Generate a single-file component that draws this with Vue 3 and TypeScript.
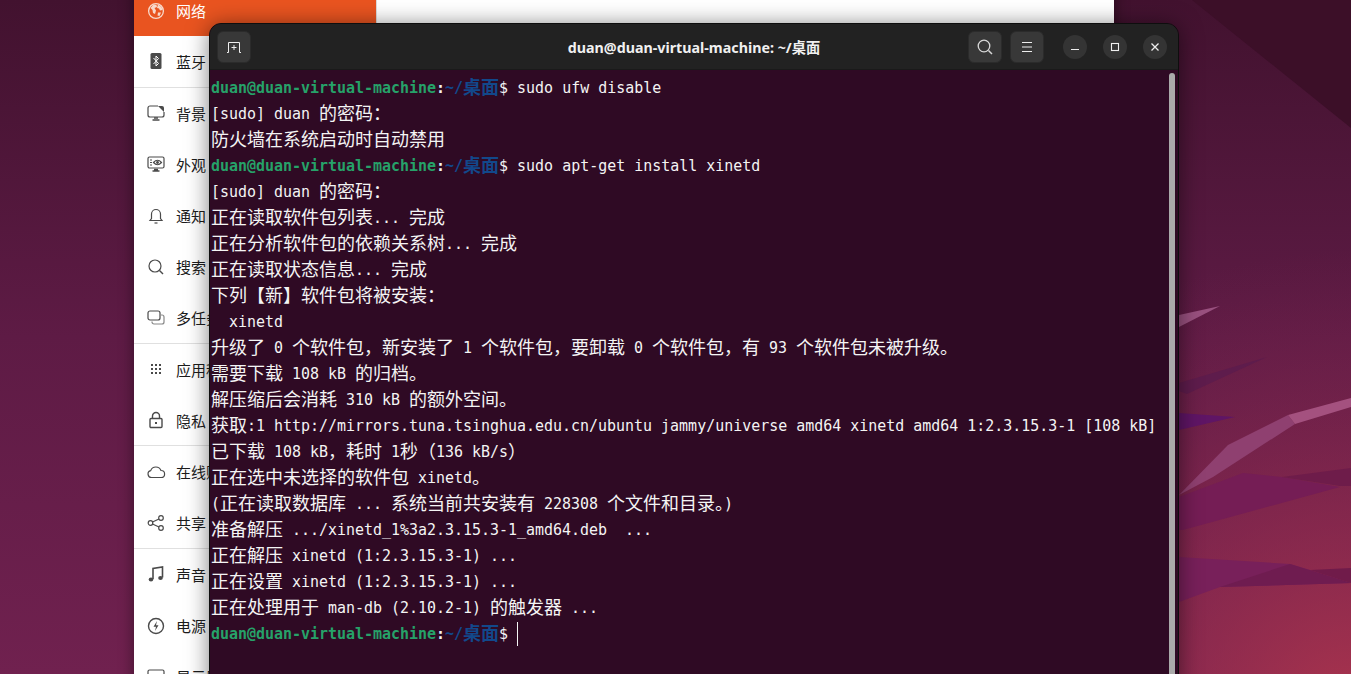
<script setup lang="ts">
interface Seg { t: string; c: string }
const PROMPT_HOST = 'duan@duan-virtual-machine'

function split(text: string, cls = ''): Seg[] {
  const out: Seg[] = []
  const re = /[\u3000-\u9fff\uff00-\uffef]+|[^\u3000-\u9fff\uff00-\uffef]+/g
  for (const m of text.match(re) ?? []) {
    const cjk = /[\u3000-\u9fff\uff00-\uffef]/.test(m[0])
    out.push({ t: m, c: `${cls} ${cjk ? 'cjk' : 'lat'}`.trim() })
  }
  return out
}
function prompt(cmd: string): Seg[] {
  return [
    ...split(PROMPT_HOST, 'green'),
    ...split(':', 'plainb'),
    ...split('~/桌面', 'blue'),
    ...split('$ ' + cmd),
  ]
}
const lines: Seg[][] = [
  prompt('sudo ufw disable'),
  split('[sudo] duan 的密码：'),
  split('防火墙在系统启动时自动禁用'),
  prompt('sudo apt-get install xinetd'),
  split('[sudo] duan 的密码：'),
  split('正在读取软件包列表... 完成'),
  split('正在分析软件包的依赖关系树... 完成'),
  split('正在读取状态信息... 完成'),
  split('下列【新】软件包将被安装：'),
  split('  xinetd'),
  split('升级了 0 个软件包，新安装了 1 个软件包，要卸载 0 个软件包，有 93 个软件包未被升级。'),
  split('需要下载 108 kB 的归档。'),
  split('解压缩后会消耗 310 kB 的额外空间。'),
  split('获取:1 http://mirrors.tuna.tsinghua.edu.cn/ubuntu jammy/universe amd64 xinetd amd64 1:2.3.15.3-1 [108 kB]'),
  split('已下载 108 kB，耗时 1秒（136 kB/s）'),
  split('正在选中未选择的软件包 xinetd。'),
  split('(正在读取数据库 ... 系统当前共安装有 228308 个文件和目录。)'),
  split('准备解压 .../xinetd_1%3a2.3.15.3-1_amd64.deb  ...'),
  split('正在解压 xinetd (1:2.3.15.3-1) ...'),
  split('正在设置 xinetd (1:2.3.15.3-1) ...'),
  split('正在处理用于 man-db (2.10.2-1) 的触发器 ...'),
  prompt(''),
]
const menu = [
  { icon: 'net', label: '网络', active: true },
  { icon: 'bt', label: '蓝牙', sep: true },
  { icon: 'bg', label: '背景' },
  { icon: 'look', label: '外观' },
  { icon: 'bell', label: '通知' },
  { icon: 'search', label: '搜索' },
  { icon: 'multi', label: '多任务', sep: true },
  { icon: 'apps', label: '应用程序' },
  { icon: 'lock', label: '隐私', sep: true },
  { icon: 'cloud', label: '在线账户' },
  { icon: 'share', label: '共享', sep: true },
  { icon: 'music', label: '声音' },
  { icon: 'power', label: '电源' },
  { icon: 'display', label: '显示器' },
]
</script>

<template>
  <div class="desktop">
    <svg class="wallpaper" width="1351" height="674" viewBox="0 0 1351 674">
      <defs>
        <linearGradient id="base" x1="0" y1="0" x2="0" y2="674" gradientUnits="userSpaceOnUse">
          <stop offset="0" stop-color="#42122f" />
          <stop offset="0.5" stop-color="#5e1b45" />
          <stop offset="1" stop-color="#70214f" />
        </linearGradient>
        <radialGradient id="warm" cx="1351" cy="720" r="470" gradientUnits="userSpaceOnUse">
          <stop offset="0" stop-color="#b5374c" stop-opacity="0.85" />
          <stop offset="0.5" stop-color="#a0304f" stop-opacity="0.42" />
          <stop offset="1" stop-color="#8a2a52" stop-opacity="0" />
        </radialGradient>
      </defs>
      <rect width="1351" height="674" fill="url(#base)" />
      <rect width="1351" height="674" fill="url(#warm)" />
      <polygon points="1192,0 1351,128 1351,0" fill="#3c0f28" />
      <polygon points="1179,315 1220,306 1179,327" fill="#99517f" />
      <polygon points="1179,383 1267,357 1187,394 1179,391" fill="#5e1c4c" />
      <polygon points="1179,413 1235,417 1179,430" fill="#5f1565" />
      <polygon points="1179,495 1228,445 1288,415 1295,424 1213,477" fill="#8f4070" />
      <polygon points="1288,415 1351,398 1351,407 1295,424" fill="#a4517f" />
      <polygon points="1179,497 1243,473 1282,477 1340,487 1183,530 1179,530" fill="#751d55" />
      <polygon points="1282,477 1351,468 1351,486 1340,486" fill="#6e1c4a" />
      <polygon points="1179,557 1290,564 1310,570 1351,583 1220,587 1179,602" fill="#78205a" />
      <polygon points="1220,587 1290,564 1351,583" fill="#6f1c50" />
      <polygon points="1310,570 1351,568 1351,583" fill="#701b4a" />
    </svg>

    <section class="settings">
      <aside class="sidebar">
        <div v-for="m in menu" :key="m.label" class="row" :class="{ active: m.active, sep: m.sep }">
          <svg class="ico" width="20" height="20" viewBox="0 0 20 20" fill="none" stroke="#4a4a4a" stroke-width="1.2">
            <template v-if="m.icon === 'net'">
              <circle cx="10" cy="10" r="7.4" stroke="#f8d9cb" stroke-width="1.3" />
              <path d="M4.5 7l3-3.5 3 .5 .5 2-2.5 1 1.5 2.5-1 3.5-2-1-.5-3zM12 3.5l3.5 2.5 1 3-2.5 .5-1-2-2-.5zM12 11.500l3 0-1.500 3.500-2-.5z" fill="#f8d9cb" stroke="none" />
            </template>
            <template v-else-if="m.icon === 'bt'">
              <rect x="4.500" y="2" width="11" height="16" rx="1.500" fill="#4a4a4a" stroke="none" />
              <path d="M7.500 7l5 5.500-2.500 2.500v-10l2.500 2.500-5 5.500" stroke="#fff" stroke-width="1" />
            </template>
            <template v-else-if="m.icon === 'bg'">
              <path d="M12 3H4a2 2 0 0 0-2 2v7a2 2 0 0 0 2 2h12a2 2 0 0 0 2-2V9" />
              <path d="M12 3h4a2 2 0 0 1 2 2v4z" fill="#4a4a4a" stroke="none" />
              <path d="M8 15h4M6.500 17h7" stroke-width="1.500" />
            </template>
            <template v-else-if="m.icon === 'look'">
              <rect x="2" y="3" width="16" height="11" rx="1.500" />
              <path d="M4 6h2M4 8.500h2M4 11h2" />
              <path d="M7.500 8.500q4-4.500 8 0q-4 4.500-8 0z" />
              <circle cx="11.500" cy="8.500" r="1.400" fill="#4a4a4a" stroke="none" />
              <path d="M8 15.500h4M6.500 17h7" stroke-width="1.500" />
            </template>
            <template v-else-if="m.icon === 'bell'">
              <path d="M4 14.500h12l-1.500-2V8a4.500 4.500 0 0 0-9 0v4.500z" />
              <path d="M8.500 17h3" />
            </template>
            <template v-else-if="m.icon === 'search'">
              <circle cx="9" cy="9" r="6" />
              <path d="M13.500 13.500L17 17" stroke-width="1.400" />
            </template>
            <template v-else-if="m.icon === 'multi'">
              <rect x="2" y="3" width="12" height="9" rx="2" />
              <path d="M15 7h1a2 2 0 0 1 2 2v5a2 2 0 0 1-2 2H8a2 2 0 0 1-2-2v-.5" stroke="#888" />
            </template>
            <template v-else-if="m.icon === 'apps'">
              <g fill="#4a4a4a" stroke="none">
                <rect x="5" y="5" width="2" height="2" /><rect x="9" y="5" width="2" height="2" /><rect x="13" y="5" width="2" height="2" />
                <rect x="5" y="9" width="2" height="2" /><rect x="9" y="9" width="2" height="2" /><rect x="13" y="9" width="2" height="2" />
                <rect x="5" y="13" width="2" height="2" /><rect x="9" y="13" width="2" height="2" /><rect x="13" y="13" width="2" height="2" />
              </g>
            </template>
            <template v-else-if="m.icon === 'lock'">
              <rect x="4" y="8.500" width="12" height="9" rx="1" stroke-width="1.400" />
              <path d="M6.500 8.500V6a3.500 3.500 0 0 1 7 0v2.500" stroke-width="1.400" />
              <rect x="9" y="12" width="2" height="2" fill="#4a4a4a" stroke="none" />
            </template>
            <template v-else-if="m.icon === 'cloud'">
              <path d="M5.500 15.500a3.500 3.500 0 0 1-.8-6.900A5.500 5.500 0 0 1 15 8.500a3.500 3.500 0 0 1 .2 7z" />
            </template>
            <template v-else-if="m.icon === 'share'">
              <circle cx="4.500" cy="10" r="2.300" />
              <circle cx="15" cy="5" r="2.300" />
              <circle cx="15" cy="15" r="2.300" />
              <path d="M6.500 9l6.500-3M6.500 11l6.500 3" />
            </template>
            <template v-else-if="m.icon === 'music'">
              <path d="M7 15V4.500L16.500 3v10.500" stroke-width="1.600" />
              <ellipse cx="5" cy="15.500" rx="2.300" ry="1.900" fill="#4a4a4a" stroke="none" />
              <ellipse cx="14.500" cy="14" rx="2.300" ry="1.900" fill="#4a4a4a" stroke="none" />
            </template>
            <template v-else-if="m.icon === 'power'">
              <circle cx="10" cy="10" r="7.500" stroke-width="1.400" />
              <path d="M11 5L7.500 10.800h2.500L9 15l3.500-5.800H10z" fill="#4a4a4a" stroke="none" />
            </template>
            <template v-else>
              <rect x="2" y="3" width="16" height="11" rx="1.500" />
            </template>
          </svg>
          <span class="label">{{ m.label }}</span>
        </div>
      </aside>
      <main class="pane"></main>
    </section>

    <section class="terminal">
      <header class="titlebar">
        <div class="tb-left">
          <button class="tb-btn">
            <svg width="16" height="16" viewBox="0 0 16 16" fill="none" stroke="#eee" stroke-width="1">
              <path d="M1 13.500h1.500V3.500h11v10h1.500" />
              <path d="M8 6v5M5.500 8.500h5" />
            </svg>
          </button>
        </div>
        <div class="title">duan@duan-virtual-machine: ~/桌面</div>
        <div class="tb-right">
          <button class="tb-btn">
            <svg width="18" height="18" viewBox="0 0 18 18" fill="none" stroke="#d8d8d8" stroke-width="1.300">
              <circle cx="8" cy="8" r="5.800" />
              <path d="M12.500 12.500L16 16" stroke-width="1.500" />
            </svg>
          </button>
          <button class="tb-btn">
            <svg width="16" height="16" viewBox="0 0 16 16" fill="none" stroke="#eee" stroke-width="1">
              <path d="M3 3.500h10M3 8h10M3 12.500h10" />
            </svg>
          </button>
          <div class="winctl">
            <button class="circle">
              <svg width="12" height="12" viewBox="0 0 12 12"><path d="M2 8.500h8" stroke="#eee" stroke-width="1.200" /></svg>
            </button>
            <button class="circle">
              <svg width="12" height="12" viewBox="0 0 12 12"><rect x="2.500" y="2.500" width="7" height="7" fill="none" stroke="#eee" stroke-width="1.100" /></svg>
            </button>
            <button class="circle">
              <svg width="12" height="12" viewBox="0 0 12 12"><path d="M2.500 2.500l7 7M9.500 2.500l-7 7" stroke="#eee" stroke-width="1.300" /></svg>
            </button>
          </div>
        </div>
      </header>
      <div class="console">
        <div class="output">
          <div v-for="(line, i) in lines" :key="i" class="line">
            <span v-for="(s, j) in line" :key="j" :class="s.c">{{ s.t }}</span>
            <span v-if="i === lines.length - 1" class="cursor"></span>
          </div>
        </div>
        <div class="scrollbar"></div>
      </div>
    </section>
  </div>
</template>

<style scoped>
.desktop {
  position: relative;
  width: 1351px;
  height: 674px;
  overflow: hidden;
  background: #42122f;
}
.wallpaper {
  position: absolute;
  inset: 0;
  display: block;
}
.settings {
  position: absolute;
  left: 134px;
  top: -15px;
  width: 980px;
  height: 760px;
  display: flex;
  background: #fff;
  box-shadow: 0 0 14px rgba(0, 0, 0, 0.45);
}
.sidebar {
  width: 242px;
  flex: none;
  border-right: 1px solid #dcdcdc;
  box-sizing: content-box;
}
.pane {
  flex: 1;
  background: #fff;
}
.row {
  height: 51.25px;
  box-sizing: border-box;
  display: flex;
  align-items: center;
  padding-left: 12px;
  gap: 10px;
  font: 15px "Noto Sans CJK SC", "Liberation Sans", sans-serif;
  color: #1c1c1c;
}
.row.sep {
  border-bottom: 1px solid #e0e0e0;
}
.row.active {
  background: #e95420;
  color: #fff;
}
.ico {
  flex: none;
}
.label {
  white-space: nowrap;
}
.terminal {
  position: absolute;
  left: 209px;
  top: 23px;
  width: 970px;
  height: 700px;
  box-sizing: border-box;
  border: 1px solid #0e0e0e;
  border-radius: 12px 12px 0 0;
  box-shadow: 0 2px 22px rgba(0, 0, 0, 0.5);
  display: flex;
  flex-direction: column;
  overflow: hidden;
  background: #300a24;
}
.titlebar {
  height: 46px;
  flex: none;
  box-sizing: border-box;
  background: #222222;
  border-bottom: 1px solid #1a1a1a;
  display: grid;
  grid-template-columns: 1fr auto 1fr;
  align-items: center;
  padding: 0 9px;
}
.tb-left {
  display: flex;
  margin-left: -2px;
}
.tb-right {
  display: flex;
  align-items: center;
  justify-content: flex-end;
  gap: 8px;
  margin-right: 2px;
}
.tb-btn {
  width: 34px;
  height: 32px;
  padding: 0;
  border: 1px solid #2b2b2b;
  border-radius: 6px;
  background: #383838;
  display: flex;
  align-items: center;
  justify-content: center;
}
.title {
  text-align: center;
  color: #f0f0f0;
  font: 700 14.25px "Noto Sans", "Noto Sans CJK SC", sans-serif;
  white-space: nowrap;
}
.winctl {
  display: flex;
  gap: 16px;
  margin-left: 11px;
}
.circle {
  width: 24px;
  height: 24px;
  padding: 0;
  border: 0;
  border-radius: 50%;
  background: #343434;
  display: flex;
  align-items: center;
  justify-content: center;
}
.console {
  flex: 1;
  display: flex;
  background: #2f0a24;
  position: relative;
}
.output {
  flex: 1;
  padding: 3px 0 0 1px;
  color: #f4f4f4;
}
.line {
  height: 26px;
  font: 18px/26px "Noto Sans CJK SC", sans-serif;
  white-space: pre;
}
.lat {
  font: 14.96px/26px "DejaVu Sans Mono", monospace;
  vertical-align: 1px;
}
.cjk {
  font: 18px/26px "Noto Sans CJK SC", sans-serif;
}
.green {
  color: #26a269;
  font-weight: 700;
}
.blue {
  color: #12488b;
  font-weight: 700;
}
.plainb {
  font-weight: 700;
}
.cursor {
  display: inline-block;
  width: 1px;
  height: 24px;
  background: #f4f4f4;
  vertical-align: -6px;
}
.scrollbar {
  position: absolute;
  right: 3px;
  top: 3px;
  bottom: 0;
  width: 6px;
  border-radius: 3px 3px 0 0;
  background: #aaaaaa;
}
</style>

<style>
html,
body {
  margin: 0;
  overflow: hidden;
}
</style>
